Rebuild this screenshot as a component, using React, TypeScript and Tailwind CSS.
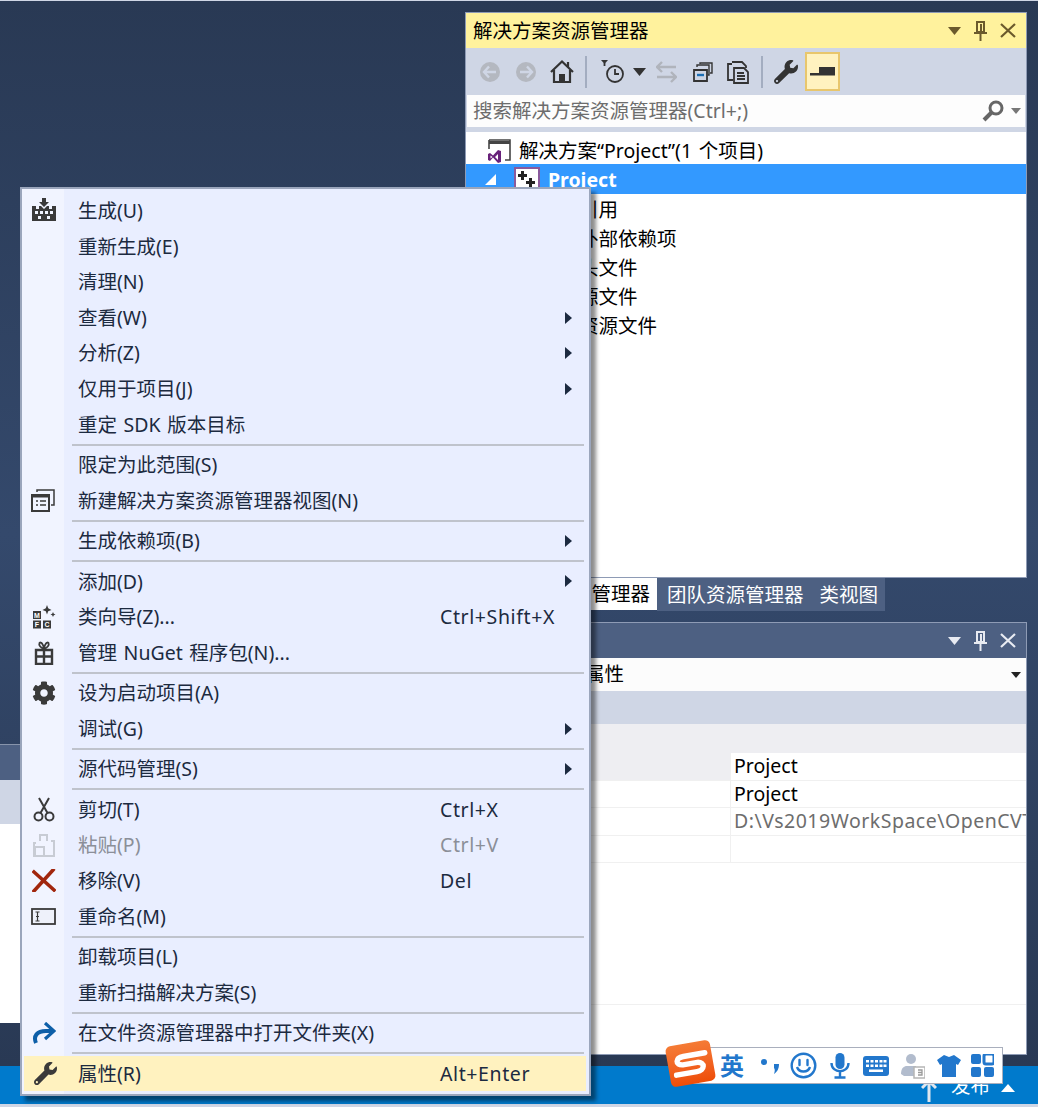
import React from "react";
import { FaWrench, FaCog } from "react-icons/fa";

type Item =
  | { sep: true }
  | { label: string; key?: string; arrow?: boolean; icon?: React.ReactNode; disabled?: boolean; active?: boolean };

const Dark = "#3a3a3a";

const BuildIcon = () => (
  <svg width="26" height="25" viewBox="0 0 26 25">
    <path d="M11 0h4v4h3l-5 5-5-5h3z" fill={Dark} />
    <path d="M1 8h4v3h3V8h2l3 3 3-3h2v3h3V8h4v15H1z" fill={Dark} />
    <g fill="#f0f4ff">
      <rect x="4" y="13" width="3" height="3" />
      <rect x="9" y="13" width="3" height="3" />
      <rect x="14" y="13" width="3" height="3" />
      <rect x="19" y="13" width="3" height="3" />
      <rect x="7" y="18" width="3" height="3" />
      <rect x="16" y="18" width="3" height="3" />
    </g>
  </svg>
);
const ViewIcon = () => (
  <svg width="25" height="24" viewBox="0 0 25 24" fill="none" stroke={Dark} strokeWidth="2">
    <path d="M1 7h17v16H1z" />
    <path d="M1 8h17" strokeWidth="3" />
    <path d="M6 4V2h17v15h-3" strokeWidth="1.5" />
    <path d="M5 13h2M9 13h6M5 17h2M9 17h6" strokeWidth="1.6" />
  </svg>
);
const MfcIcon = () => (
  <svg width="24" height="24" viewBox="0 0 24 24">
    <rect x="1" y="6" width="8" height="8" fill={Dark} />
    <rect x="1" y="15.5" width="8" height="8" fill={Dark} />
    <rect x="11" y="15.5" width="8" height="8" fill={Dark} />
    <g fill="#fff" fontSize="7" fontWeight="700" fontFamily="Liberation Sans" textAnchor="middle">
      <text x="5" y="12.5">M</text>
      <text x="5" y="22">F</text>
      <text x="15" y="22">C</text>
    </g>
    <path d="M15 0l1.200 3.300L19.500 5l-3.300 1.200L15 9.500l-1.200-3.300L10.500 5l3.300-1.700zM21 7l.8 1.800 1.700.7-1.700.8L21 12l-.8-1.700-1.700-.8 1.700-.7z" fill={Dark} />
  </svg>
);
const GiftIcon = () => (
  <svg width="20" height="24" viewBox="0 0 20 24" fill="none" stroke={Dark} strokeWidth="2.400">
    <path d="M2 9h16v14H2zM2 15.500h16M10 8v15" />
    <path d="M10 7.500C7 7.500 4.500 4 5.500 2c1.500-1.500 3.500.5 4.500 5.500 1-5 3-7 4.500-5.500 1 2-1.500 5.500-4.500 5.500z" strokeWidth="1.800" />
  </svg>
);
const ScissorsIcon = () => (
  <svg width="22" height="25" viewBox="0 0 22 25" fill="none" stroke={Dark} strokeWidth="2">
    <circle cx="5.500" cy="19.500" r="4" />
    <circle cx="16.500" cy="19.500" r="4" />
    <path d="M7.500 16L16 1M14.500 16L6 1" />
  </svg>
);
const PasteIcon = () => (
  <svg width="22" height="24" viewBox="0 0 22 24" fill="none" stroke="#c8ccd4" strokeWidth="2">
    <path d="M7 8V2h7v6" />
    <path d="M3 10H1v13h20V8h-3" />
    <path d="M2 14h9v9H2z" />
  </svg>
);
const RemoveIcon = () => (
  <svg width="24" height="23" viewBox="0 0 24 23">
    <path d="M2 3l20 18M21 1L2 22" stroke="#a1260d" strokeWidth="3.600" strokeLinecap="square" fill="none" />
  </svg>
);
const RenameIcon = () => (
  <svg width="25" height="17" viewBox="0 0 25 17" fill="none">
    <rect x="1" y="1" width="23" height="15" fill="#eef1fa" stroke={Dark} strokeWidth="1.800" />
    <path d="M4.500 4h4M4.500 13h4M6.500 4v9M5 8.500h3" stroke={Dark} strokeWidth="1.200" />
  </svg>
);
const RedoIcon = () => (
  <svg width="24" height="22" viewBox="0 0 24 22" fill="none">
    <path d="M4 21C1 14 5 9 14 9h7" stroke="#0e5fa8" strokeWidth="4" />
    <path d="M13 1l9 8-9 8" stroke="#0e5fa8" strokeWidth="3.200" />
  </svg>
);

const items: Item[] = [
  { label: "生成(U)", icon: <BuildIcon /> },
  { label: "重新生成(E)" },
  { label: "清理(N)" },
  { label: "查看(W)", arrow: true },
  { label: "分析(Z)", arrow: true },
  { label: "仅用于项目(J)", arrow: true },
  { label: "重定 SDK 版本目标" },
  { sep: true },
  { label: "限定为此范围(S)" },
  { label: "新建解决方案资源管理器视图(N)", icon: <ViewIcon /> },
  { sep: true },
  { label: "生成依赖项(B)", arrow: true },
  { sep: true },
  { label: "添加(D)", arrow: true },
  { label: "类向导(Z)...", key: "Ctrl+Shift+X", icon: <MfcIcon /> },
  { label: "管理 NuGet 程序包(N)...", icon: <GiftIcon /> },
  { sep: true },
  { label: "设为启动项目(A)", icon: <FaCog size={24} color={Dark} /> },
  { label: "调试(G)", arrow: true },
  { sep: true },
  { label: "源代码管理(S)", arrow: true },
  { sep: true },
  { label: "剪切(T)", key: "Ctrl+X", icon: <ScissorsIcon /> },
  { label: "粘贴(P)", key: "Ctrl+V", icon: <PasteIcon />, disabled: true },
  { label: "移除(V)", key: "Del", icon: <RemoveIcon /> },
  { label: "重命名(M)", icon: <RenameIcon /> },
  { sep: true },
  { label: "卸载项目(L)" },
  { label: "重新扫描解决方案(S)" },
  { sep: true },
  { label: "在文件资源管理器中打开文件夹(X)", icon: <RedoIcon /> },
  { sep: true },
  { label: "属性(R)", key: "Alt+Enter", icon: <FaWrench size={23} color={Dark} />, active: true },
];

const Menu = () => (
  <div className="absolute left-[20px] top-[187px] w-[571px] h-[909px] border-2 border-[#9ba6bc] bg-[#e9eeff] shadow-[5px_5px_4px_rgba(0,0,0,0.45)] text-[#1c2a40] z-10">
    <div className="absolute left-0 top-0 bottom-0 w-[42px] bg-[#f1f4ff]" />
    <div className="relative pt-[4px] flex flex-col">
      {items.map((it, i) =>
        "sep" in it ? (
          <div key={i} className="h-[4.900px] ml-[50px] mr-[5px] flex items-center">
            <div className="h-[2px] w-full bg-[#bfc3cc]" />
          </div>
        ) : (
          <div key={i} className={`h-[35.600px] flex items-center relative ${it.active ? "bg-[#fff2bf] ml-[2px] mr-[3px] pl-[54px]" : "pl-[56px]"} ${it.disabled ? "text-[#8b8f98]" : ""}`}>
            {it.icon && (
              <div className="absolute left-0 top-0 bottom-0 w-[43px] flex items-center justify-center">{it.icon}</div>
            )}
            <span className="whitespace-nowrap">{it.label}</span>
            {it.key && <span className={`absolute top-0 bottom-0 flex items-center whitespace-nowrap tracking-[0.6px] ${it.active ? "left-[416px]" : "left-[418px]"}`}>{it.key}</span>}
            {it.arrow && <div className="absolute left-[543px] w-0 h-0 border-y-[6px] border-y-transparent border-l-[7px] border-l-[#1c2a40]" />}
          </div>
        )
      )}
    </div>
  </div>
);

const Caret = ({ color }: { color: string }) => (
  <svg width="13" height="8" viewBox="0 0 13 8">
    <path d="M0 0h13L6.500 8z" fill={color} />
  </svg>
);
const Pin = ({ color }: { color: string }) => (
  <svg width="13" height="20" viewBox="0 0 13 20" fill="none" stroke={color} strokeWidth="2">
    <path d="M3 1h7v10H3zM7 3v8" />
    <path d="M0 12h13" />
    <path d="M6.500 12v8" />
  </svg>
);
const Close = ({ color }: { color: string }) => (
  <svg width="16" height="15" viewBox="0 0 16 15" fill="none" stroke={color} strokeWidth="2.200">
    <path d="M1 1l14 13M15 1L1 14" />
  </svg>
);
const WinControls = ({ color }: { color: string }) => (
  <div className="flex items-center ml-auto mr-[10px] gap-[13px]">
    <Caret color={color} />
    <Pin color={color} />
    <Close color={color} />
  </div>
);

const Sep = () => <div className="w-[2px] h-[32px] bg-[#a3adc0]" />;
const Circle = ({ flip }: { flip?: boolean }) => (
  <svg width="20" height="20" viewBox="0 0 20 20" className={flip ? "rotate-180" : ""}>
    <circle cx="10" cy="10" r="10" fill="#b4b8c0" />
    <path d="M9 4.500L4 10l5 5.500M4.500 10H16" stroke="#cfd6e5" strokeWidth="2.400" fill="none" />
  </svg>
);
const Toolbar = () => (
  <div className="h-[47px] bg-[#cfd6e5] flex items-center pl-[14px]">
    <Circle />
    <div className="w-[16px]" />
    <Circle flip />
    <svg width="24" height="25" viewBox="0 0 24 25" className="ml-[14px]" fill="none" stroke="#333" strokeWidth="2.200">
      <path d="M1 13L12 2.500 23 13" />
      <path d="M4 11v12h16V11" />
      <rect x="9" y="15" width="6" height="8" fill="#333" stroke="none" />
      <path d="M18 3v5" />
    </svg>
    <div className="ml-[11px]"><Sep /></div>
    <svg width="24" height="24" viewBox="0 0 24 24" className="ml-[14px]" fill="none" stroke="#333" strokeWidth="1.800">
      <path d="M0 0h7L3.500 4z" fill="#333" stroke="none" />
      <path d="M3.500 3v3" />
      <circle cx="14" cy="14" r="8" />
      <path d="M14 9v5h4" />
    </svg>
    <div className="ml-[8px]"><Caret color="#333" /></div>
    <svg width="21" height="22" viewBox="0 0 21 22" className="ml-[10px]" fill="none" stroke="#b0b4bc" strokeWidth="2.400">
      <path d="M6 1L1 6l5 5M1 6h19M15 11l5 5-5 5M20 16H1" />
    </svg>
    <svg width="20" height="20" viewBox="0 0 20 20" className="ml-[16px]" fill="none" stroke="#333" strokeWidth="1.800">
      <path d="M1 8h13v11H1z" />
      <path d="M4 5V3h12v10h-1M7 2V1h12v10h-2" strokeWidth="1.400" />
      <path d="M4 13h7" stroke="#1c6fb5" strokeWidth="2.400" />
    </svg>
    <svg width="24" height="24" viewBox="0 0 24 24" className="ml-[13px]" fill="none" stroke="#333" strokeWidth="1.800">
      <path d="M7 20H2V4h4M6 2h10l4 4v2" />
      <path d="M8 8h10l4 4v11H8z" fill="#cfd6e5" />
      <path d="M11 13h7M11 16h8M11 19h8" />
    </svg>
    <div className="ml-[11px]"><Sep /></div>
    <FaWrench size={24} color="#333" className="ml-[11px]" />
    <div className="ml-[7px] w-[35px] h-[39px] bg-[#fff2bf] border-2 border-[#e8c66c] flex items-center justify-center">
      <svg width="26" height="10" viewBox="0 0 26 10">
        <rect x="9" y="0" width="16" height="8" fill="#333" />
        <rect x="0" y="6" width="25" height="2.500" fill="#333" />
      </svg>
    </div>
  </div>
);

const SolutionIcon = () => (
  <svg width="24" height="24" viewBox="0 0 24 24" fill="none">
    <path d="M2 1h21v20h-5M2 1v9" stroke="#444" strokeWidth="1.600" />
    <path d="M2 3.500h21" stroke="#444" strokeWidth="3" />
    <path d="M1 15l2-1 3 2.500L11 11l3 1v11l-3 1-5-5.500L3 22l-2-1z" fill="#68217a" />
    <path d="M3.500 16.500v3l2-1.500zM11 15l-3 3 3 3z" fill="#fff" />
  </svg>
);
const ProjectIcon = () => (
  <svg width="26" height="25" viewBox="0 0 26 25" fill="none">
    <rect x="1" y="1" width="24" height="23" fill="#fff" stroke="#8a5a9c" strokeWidth="2" />
    <path d="M7 4h3v3h3v3h-3v3H7v-3H4V7h3zM15 11h3v3h3v3h-3v3h-3v-3h-3v-3h3z" fill="#222" />
  </svg>
);

const SearchIcon = () => (
  <svg width="22" height="22" viewBox="0 0 22 22" fill="none" stroke="#666">
    <circle cx="14" cy="8" r="6" strokeWidth="3" />
    <path d="M9.500 12.500L2 20" strokeWidth="4" />
  </svg>
);

const TreeRow = ({ t }: { t: string }) => <div className="h-[29px] flex items-center pl-[113px] text-black whitespace-nowrap">{t}</div>;

const PropRow = ({ v, sel, grey }: { v?: string; sel?: boolean; grey?: boolean }) => (
  <div className="h-[27.500px] flex border-b border-[#f0f0f0] overflow-hidden shrink-0">
    <div className={`w-[265px] shrink-0 ${sel ? "bg-[#eeeef2]" : ""} border-r border-[#f0f0f0]`} />
    <div className={`pl-[3px] pb-[1px] whitespace-nowrap flex items-center ${grey ? "text-[#6d6d6d] tracking-[0.5px]" : "text-black"}`}>{v}</div>
  </div>
);

const Ime = () => (
  <div className="absolute left-[680px] top-[1047px] w-[323px] h-[37px] bg-white border border-[#a9afbd] z-20 flex items-center pl-[38px] text-[#2277cc]">
    <div className="absolute -left-[13px] -top-[5px] w-[45px] h-[41px] rounded-[5px] bg-gradient-to-b from-[#f57b35] to-[#ee4d06] -rotate-[10deg] flex items-center justify-center">
      <svg width="38" height="26" viewBox="0 0 42 28" fill="none">
        <path d="M38 4.500H14C5 4.500 3 12.500 12 13.500H28C37 14.500 35 23.500 26 23.500H3" stroke="#fff" strokeWidth="6" strokeLinecap="round" />
      </svg>
    </div>
    <span className="w-[26px] font-bold text-[24px] leading-none text-center">英</span>
    <svg width="22" height="20" viewBox="0 0 22 20" className="ml-[14px]"><circle cx="5" cy="6" r="3" fill="#2277cc" /><path d="M15 8h5c0 5-2 8-5 10 1-3 1-5 0-6z" fill="#2277cc" /></svg>
    <svg width="27" height="27" viewBox="0 0 27 27" fill="none" stroke="#2277cc" strokeWidth="2.400" className="ml-[9px]">
      <circle cx="13.500" cy="13.500" r="11.800" />
      <path d="M9.500 8v5M17.500 8v5" strokeLinecap="round" />
      <path d="M7 15c2 6 11 6 13 0" />
    </svg>
    <svg width="20" height="26" viewBox="0 0 20 26" fill="none" className="ml-[13px]">
      <rect x="5.500" y="0" width="9" height="16" rx="4.500" fill="#2277cc" />
      <path d="M1.500 10c0 11 17 11 17 0M10 19v5M4.500 24.500h11" stroke="#2277cc" strokeWidth="2.400" />
    </svg>
    <svg width="26" height="20" viewBox="0 0 26 20" className="ml-[13px]">
      <rect width="26" height="20" rx="3" fill="#2277cc" />
      <g fill="#fff">
        <rect x="3" y="4" width="3" height="2.500" /><rect x="7.500" y="4" width="3" height="2.500" /><rect x="12" y="4" width="3" height="2.500" /><rect x="16.500" y="4" width="3" height="2.500" /><rect x="20.500" y="4" width="3" height="2.500" />
        <rect x="3" y="8.500" width="3" height="2.500" /><rect x="7.500" y="8.500" width="3" height="2.500" /><rect x="12" y="8.500" width="3" height="2.500" /><rect x="16.500" y="8.500" width="3" height="2.500" /><rect x="20.500" y="8.500" width="3" height="2.500" />
        <rect x="6" y="13.500" width="14" height="2.500" />
      </g>
    </svg>
    <svg width="24" height="26" viewBox="0 0 24 26" className="ml-[12px]">
      <circle cx="10" cy="6" r="5" fill="#b2bccd" />
      <path d="M0 21c0-6 3-8 6-8h9v10H3z" fill="#b2bccd" />
      <rect x="13" y="14" width="11" height="11" fill="#fff" stroke="#b5b5b5" strokeWidth="1.500" />
      <path d="M17 17h4v5h-4M17 19.500h4" stroke="#999" strokeWidth="1.300" fill="none" />
    </svg>
    <svg width="24" height="24" viewBox="0 0 24 24" className="ml-[12px]">
      <path d="M7 1l5 2 5-2 7 5-3 5-2-1v13H5V10l-2 1-3-5z" fill="#2277cc" />
    </svg>
    <svg width="23" height="23" viewBox="0 0 23 23" className="ml-[10px]">
      <rect x="0" y="0" width="10" height="10" rx="2" fill="#2277cc" />
      <rect x="13" y="0" width="10" height="10" rx="2" fill="none" stroke="#2277cc" strokeWidth="3" />
      <rect x="0" y="13" width="10" height="10" rx="2" fill="#2277cc" />
      <rect x="13" y="13" width="10" height="10" rx="2" fill="#2277cc" />
    </svg>
  </div>
);

export default function App() {
  return (
    <div className="relative w-[1044px] h-[1107px] overflow-hidden bg-white font-['Noto_Sans','Noto_Sans_CJK_SC',sans-serif] text-[19.500px] leading-none [word-spacing:1.500px]">
      <div className="w-[1038px] h-full flex flex-col">
        <div className="h-[2px] bg-[#cfd6e5]" />
        <div className="flex-1 flex bg-gradient-to-b from-[#293954] via-[#34496c] to-[#293954]">
          <div className="w-[465px] flex flex-col pt-[743px]">
            <div className="h-[36px] bg-[#4d6082] border-t border-[#8794ab]" />
            <div className="h-[44px] bg-[#cfd6e5]" />
            <div className="h-[199px] bg-white" />
          </div>
          <div className="w-[562px] pt-[11px] flex flex-col">
            <div className="h-[566px] border border-[#8e9bb5] bg-white flex flex-col">
              <div className="h-[35px] bg-[#fff29d] flex items-center pl-[7px] text-black shrink-0">
                <span>解决方案资源管理器</span>
                <WinControls color="#6b5a2c" />
              </div>
              <Toolbar />
              <div className="h-[37px] bg-[#cfd6e5] shrink-0 pb-[5px] pl-[1px] pr-[1px]">
                <div className="h-[32px] bg-[#fdfdfd] flex items-center pl-[6px] text-[#6d6d6d]">
                  <span>搜索解决方案资源管理器(Ctrl+;)</span>
                  <div className="ml-auto"><SearchIcon /></div>
                  <div className="ml-[7px] mr-[4px]"><svg width="10" height="6" viewBox="0 0 10 6"><path d="M0 0h10L5 6z" fill="#777" /></svg></div>
                </div>
              </div>
              <div className="h-[32px] flex items-center pl-[21px] pt-[6px] text-black shrink-0">
                <SolutionIcon />
                <span className="ml-[8px] whitespace-nowrap">解决方案“Project”(1 个项目)</span>
              </div>
              <div className="h-[30px] bg-[#3399ff] flex items-center text-white font-bold overflow-hidden shrink-0">
                <svg width="14" height="14" viewBox="0 0 14 14" className="ml-[17px]"><path d="M13 2v11H2z" fill="#fff" /></svg>
                <div className="ml-[17px]"><ProjectIcon /></div>
                <span className="ml-[8px] pt-[2px]">Project</span>
              </div>
              <div className="pt-[1px]">
                <TreeRow t="引用" />
                <TreeRow t="外部依赖项" />
                <TreeRow t="头文件" />
                <TreeRow t="源文件" />
                <TreeRow t="资源文件" />
              </div>
            </div>
            <div className="h-[44px] flex items-start shrink-0">
              <div className="w-[192px] h-[32px] bg-white flex items-center justify-end pr-[7px] text-black">管理器</div>
              <div className="h-[33px] bg-[#4d6082] text-white flex items-center pl-[10px] pr-[7px] gap-[16px] whitespace-nowrap">
                <span>团队资源管理器</span>
                <span>类视图</span>
              </div>
            </div>
            <div className="h-[433px] border border-[#8e9bb5] bg-white flex flex-col">
              <div className="h-[35px] bg-[#4d6082] flex items-center shrink-0"><WinControls color="#e8ebf2" /></div>
              <div className="h-[33px] bg-[#fcfcfc] flex items-center justify-end pr-[5px] relative shrink-0">
                <span className="absolute left-[119px] top-[6px] text-black">属性</span>
                <svg width="10" height="6" viewBox="0 0 10 6"><path d="M0 0h10L5 6z" fill="#222" /></svg>
              </div>
              <div className="h-[33px] bg-[#cfd6e5] shrink-0" />
              <div className="h-[29px] bg-[#eeeef2] shrink-0" />
              <PropRow v="Project" sel />
              <PropRow v="Project" />
              <PropRow v="D:\Vs2019WorkSpace\OpenCVT" grey />
              <PropRow />
              <div className="h-[142px] border-b border-[#f0f0f0] shrink-0" />
            </div>
            <div className="h-[11px] shrink-0" />
          </div>
        </div>
        <div className="h-[38px] bg-[#007acc] relative text-white shrink-0">
          <span className="absolute left-[951px] top-[10px]">发布</span>
          <svg width="16" height="22" viewBox="0 0 16 22" className="absolute left-[921px] top-[14px]" fill="none" stroke="#dfe6ee" strokeWidth="3"><path d="M1 8l7-7 7 7M8 2v20" /></svg>
          <svg width="14" height="8" viewBox="0 0 14 8" className="absolute left-[1001px] top-[18px]"><path d="M0 8h14L7 0z" fill="#fff" /></svg>
        </div>
        <div className="h-[3px] bg-[#cfd6e5] shrink-0" />
      </div>
      <Menu />
      <Ime />
    </div>
  );
}
